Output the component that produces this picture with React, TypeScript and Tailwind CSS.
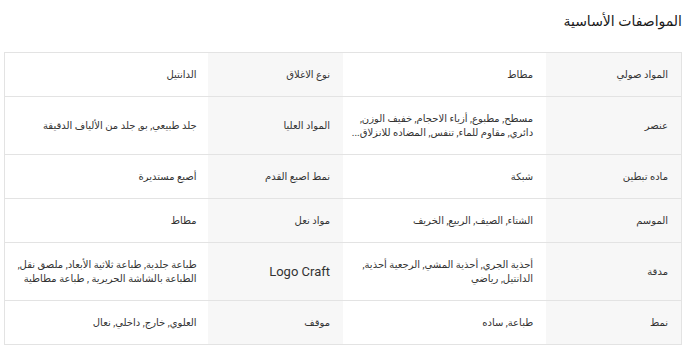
const rows: [string, React.ReactNode, string, React.ReactNode][] = [
  ['المواد صولي', 'مطاط', 'نوع الاغلاق', 'الدانتيل'],
  [
    'عنصر',
    <>
      مسطح, مطبوع, أزياء الاحجام, خفيف الوزن,
      <br />
      دائري, مقاوم للماء, تنفس, المضاده للانزلاق...
    </>,
    'المواد العليا',
    'جلد طبيعي, بو, جلد من الألياف الدقيقة',
  ],
  ['ماده تبطين', 'شبكة', 'نمط اصبع القدم', 'أصبع مستديرة'],
  ['الموسم', 'الشتاء, الصيف, الربيع, الخريف', 'مواد نعل', 'مطاط'],
  [
    'مدقة',
    <>
      أحذية الجري, أحذية المشي, الرجعية أحذية,
      <br />
      الدانتيل, رياضي
    </>,
    'Logo Craft',
    <>
      طباعة جلدية, طباعة ثلاثية الأبعاد, ملصق نقل,
      <br />
      الطباعة بالشاشة الحريرية , طباعة مطاطية
    </>,
  ],
  ['نمط', 'طباعة, ساده', 'موقف', 'العلوي, خارج, داخلي, نعال'],
]

export default function App() {
  return (
    <div dir="rtl" className="min-h-screen bg-white pl-[4px] pr-[5px] pt-[11px] font-['Roboto','DejaVu_Sans',sans-serif] text-[#333]">
      {/* العنوان */}
      <h2 className="text-[14px] font-normal leading-[20px] text-[#1a1a1a]">المواصفات الأساسية</h2>
      <table className="mt-[21px] w-full table-fixed border-collapse border border-[#e3e3e3] text-[10px] leading-[14px]">
        <colgroup>
          <col className="w-[20%]" />
          <col className="w-[30%]" />
          <col className="w-[20%]" />
          <col className="w-[30%]" />
        </colgroup>
        <tbody>
          {rows.map((r, i) => (
            <tr key={i} className="border-b border-[#e3e3e3]">
              <td className="bg-[#f7f7f7] px-[13px] py-[14.5px] align-middle">{r[0]}</td>
              <td className="whitespace-nowrap px-[13px] py-[14.5px] align-middle">{r[1]}</td>
              <td
                className={
                  r[2] === 'Logo Craft'
                    ? 'bg-[#f7f7f7] px-[13px] py-[14.5px] align-middle text-[13px]'
                    : 'bg-[#f7f7f7] px-[13px] py-[14.5px] align-middle'
                }
              >
                {r[2]}
              </td>
              <td className="whitespace-nowrap px-[11px] py-[14.5px] align-middle">{r[3]}</td>
            </tr>
          ))}
        </tbody>
      </table>
    </div>
  )
}
